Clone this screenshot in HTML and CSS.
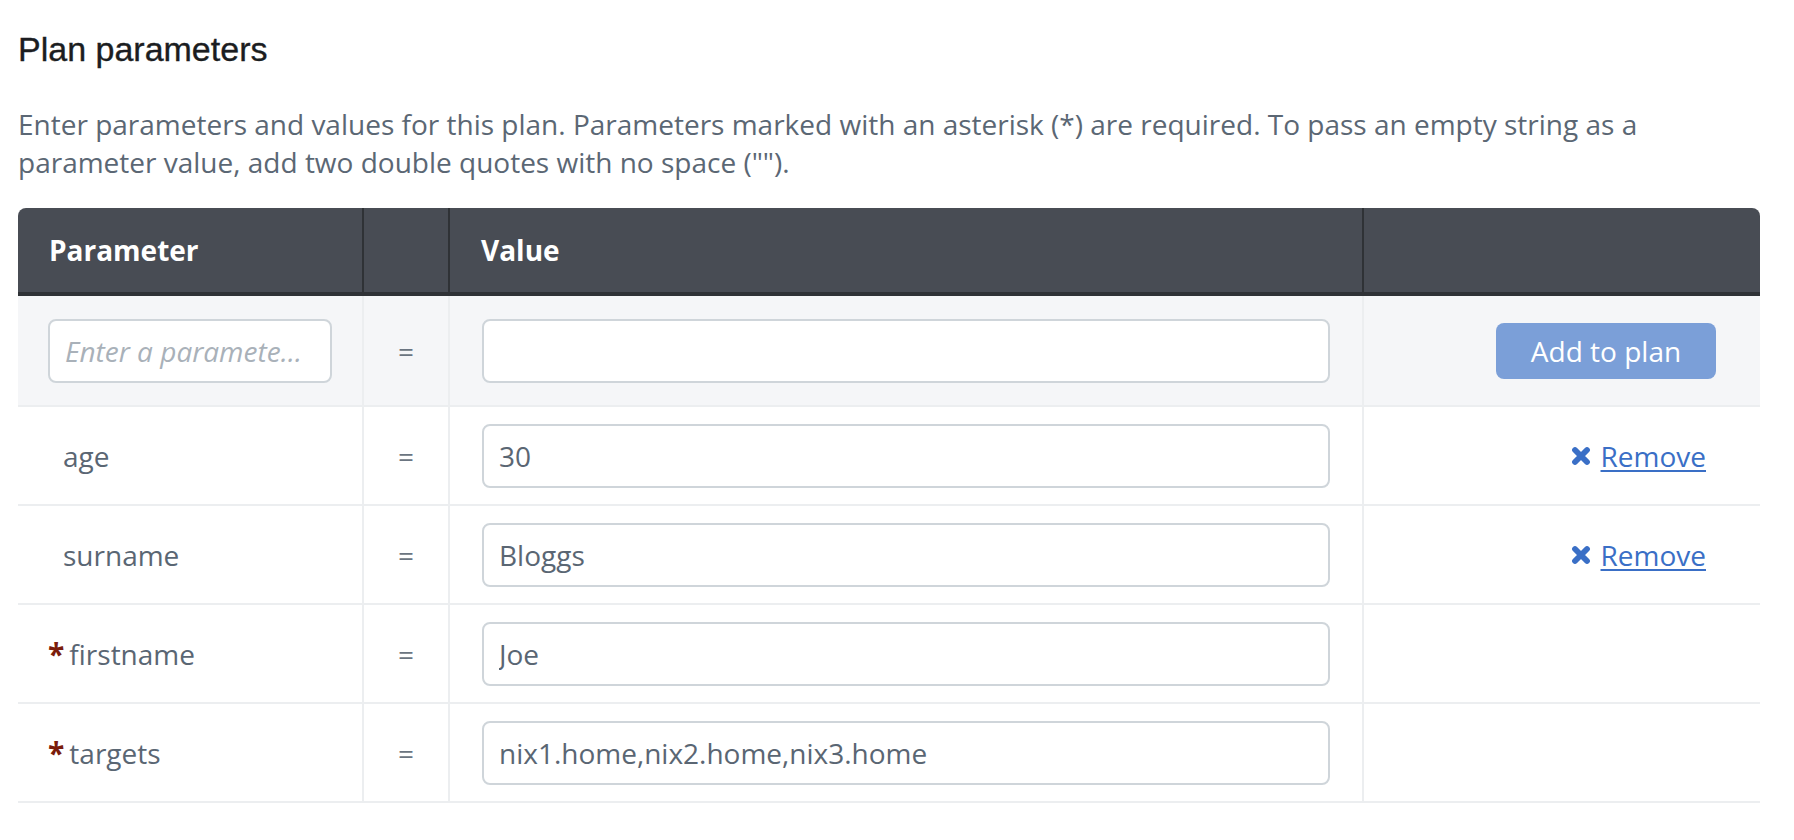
FILE: index.html
```html
<!DOCTYPE html>
<html lang="en">
<head>
<meta charset="utf-8">
<title>Plan parameters</title>
<link rel="stylesheet" href="styles.css">
</head>
<body>
<main class="page">
  <h2 class="title">Plan parameters</h2>
  <p class="desc">Enter parameters and values for this plan. Parameters marked with an asterisk (*) are required. To pass an empty string as a parameter value, add two double quotes with no space ("").</p>

  <div class="table">
    <div class="row head">
      <div class="cell">Parameter</div>
      <div class="cell"></div>
      <div class="cell">Value</div>
      <div class="cell"></div>
    </div>

    <div class="row new">
      <div class="cell"><input class="field ph" type="text" placeholder="Enter a parameter name"></div>
      <div class="cell eq">=</div>
      <div class="cell"><input class="field" type="text"></div>
      <div class="cell action"><button class="add" type="button">Add to plan</button></div>
    </div>

    <div class="row">
      <div class="cell"><span class="name">age</span></div>
      <div class="cell eq">=</div>
      <div class="cell"><input class="field" type="text" value="30"></div>
      <div class="cell action">
        <a class="remove" href="#"><svg class="x" viewBox="0 0 20 20" width="20" height="20" aria-hidden="true"><path d="M4 4 L16 16 M16 4 L4 16"/></svg><span class="rtext">Remove</span></a>
      </div>
    </div>

    <div class="row">
      <div class="cell"><span class="name">surname</span></div>
      <div class="cell eq">=</div>
      <div class="cell"><input class="field" type="text" value="Bloggs"></div>
      <div class="cell action">
        <a class="remove" href="#"><svg class="x" viewBox="0 0 20 20" width="20" height="20" aria-hidden="true"><path d="M4 4 L16 16 M16 4 L4 16"/></svg><span class="rtext">Remove</span></a>
      </div>
    </div>

    <div class="row">
      <div class="cell"><span class="req">*</span><span class="name reqname">firstname</span></div>
      <div class="cell eq">=</div>
      <div class="cell"><input class="field" type="text" value="Joe"></div>
      <div class="cell action"></div>
    </div>

    <div class="row">
      <div class="cell"><span class="req">*</span><span class="name reqname">targets</span></div>
      <div class="cell eq">=</div>
      <div class="cell"><input class="field" type="text" value="nix1.home,nix2.home,nix3.home"></div>
      <div class="cell action"></div>
    </div>
  </div>
</main>
</body>
</html>
```

FILE: styles.css
```css
* { box-sizing: border-box; }

html, body {
  margin: 0;
  padding: 0;
  background: #ffffff;
}

body {
  font-family: "Open Sans", "Noto Sans", sans-serif;
  font-size: 28px;
  color: #5a6673;
}

.page {
  padding: 29px 0 0 18px;
  width: 1760px;
}

.title {
  margin: 0;
  font-family: "Liberation Sans", Arial, sans-serif;
  font-weight: 400;
  font-size: 34px;
  line-height: 40px;
  color: #1b1d21;
  -webkit-text-stroke: 0.35px #1b1d21;
}

.desc {
  margin: 36px 0 0 0;
  font-size: 28px;
  line-height: 38px;
  color: #5b6774;
}

.table {
  margin-top: 27px;
  width: 1742px;
}

.row {
  display: grid;
  grid-template-columns: 346px 86px 914px 396px;
  height: 99px;
  border-bottom: 2px solid #eceef0;
}

.cell {
  display: flex;
  align-items: center;
  border-right: 2px solid #eceef0;
  padding: 0 30px;
  min-width: 0;
}

.cell:nth-child(3) {
  padding: 0 32px;
}

.cell:last-child {
  border-right: none;
}

.head {
  height: 88px;
  background: #484c54;
  border-bottom: 4px solid #2f3236;
  border-radius: 8px 8px 0 0;
  color: #ffffff;
  font-weight: 700;
}

.head .cell {
  border-right-color: #2f3236;
  padding-left: 31px;
}

.head .cell:nth-child(3) {
  padding-left: 31px;
}

.head .cell:last-child {
  border-right: none;
}

.new {
  height: 111px;
  background: #f5f6f8;
}

.field {
  width: 100%;
  height: 64px;
  margin: 0;
  padding: 0 15px;
  border: 2px solid #cfd5da;
  border-radius: 8px;
  background: #ffffff;
  font-family: "Open Sans", "Noto Sans", sans-serif;
  font-size: 28px;
  color: #5a6673;
  outline: none;
  text-overflow: ellipsis;
}

.field.ph {
  padding-right: 24px;
}

.field::placeholder {
  color: #a9b1b9;
  font-style: italic;
  opacity: 1;
}

.eq {
  justify-content: center;
  padding: 0;
  color: #6b7581;
}

.name {
  padding-left: 15px;
}

.req {
  color: #7b1c0b;
  font-weight: 700;
  font-size: 30px;
}

.name.reqname {
  padding-left: 5px;
}

.action {
  justify-content: flex-end;
  padding: 0 44px 0 0;
}

.add {
  height: 56px;
  width: 220px;
  padding: 0;
  border: none;
  border-radius: 8px;
  background: #7b9fd8;
  color: #ffffff;
  font-family: "Open Sans", "Noto Sans", sans-serif;
  font-size: 28px;
}

.remove {
  display: flex;
  align-items: center;
  margin-right: 10px;
  color: #3a6fc6;
  text-decoration: none;
}

.x {
  display: block;
  margin-right: 10px;
  fill: none;
  stroke: #3a6fc6;
  stroke-width: 5.8;
  stroke-linecap: round;
}

.rtext {
  text-decoration: underline;
  text-decoration-thickness: 2px;
  text-underline-offset: 3px;
}
```
